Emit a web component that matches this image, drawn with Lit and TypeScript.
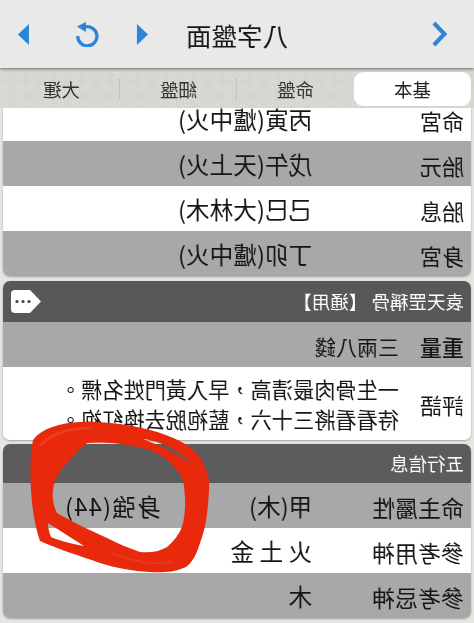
import { LitElement, html, css } from "lit";
import { customElement } from "lit/decorators.js";

@customElement("app-root")
export class AppRoot extends LitElement {
  static styles = css`
    :host {
      display: block;
      position: relative;
      width: 474px;
      height: 623px;
      overflow: hidden;
      font-family: "Noto Sans CJK TC", "Noto Sans", sans-serif;
      color: #151515;
      background: #e6e5e1;
    }
    .flip {
      transform: scaleX(-1);
      width: 474px;
      height: 623px;
      display: flex;
      flex-direction: column;
    }
    .top {
      height: 68px;
      flex: none;
      background: #e9e9e9;
      display: grid;
      grid-template-columns: 1fr auto 1fr;
      align-items: center;
      position: relative;
      z-index: 2;
      box-shadow: 0 1px 3px rgba(60, 60, 60, 0.7);
    }
    .title {
      font-size: 25.5px;
      line-height: 1;
      padding-top: 2px;
    }
    .chev {
      margin-left: 26px;
      display: block;
    }
    .tools {
      display: flex;
      justify-content: flex-end;
      align-items: center;
      padding-right: 18px;
      gap: 37px;
    }
    .tools svg {
      display: block;
    }
    .tools .reload {
      margin-right: 9px;
    }
    .tabs {
      height: 40px;
      flex: none;
      box-sizing: border-box;
      padding: 4px 3px 2px;
      display: grid;
      grid-template-columns: repeat(4, 1fr);
      background-color: #d6d4cf;
      background-image: radial-gradient(circle, transparent 2px, rgba(255, 255, 255, 0.22) 2px 3px, transparent 3px 5px, rgba(255, 255, 255, 0.16) 5px 6px, transparent 6px);
      background-size: 14px 14px;
    }
    .tab {
      display: flex;
      align-items: center;
      justify-content: center;
      font-size: 18.5px;
      line-height: 1;
      color: #333;
      position: relative;
    }
    .tab + .tab + .tab::before,
    .tab + .tab + .tab + .tab::before {
      content: "";
      position: absolute;
      left: 0;
      top: 6px;
      bottom: 6px;
      width: 1px;
      background: #c4c2bd;
    }
    .tab.on {
      background: #fff;
      border-radius: 9px;
      color: #222;
    }
    .main {
      flex: 1;
      overflow: hidden;
      padding: 0 3px;
      display: flex;
      flex-direction: column;
      gap: 5px;
      background-color: #e6e5e1;
    }
    .card {
      border-radius: 7px;
      overflow: hidden;
      flex: none;
      box-shadow: 0 1px 2px rgba(0, 0, 0, 0.3);
    }
    .first {
      margin-top: -12px;
    }
    .third {
      margin-top: -1px;
    }
    .row {
      height: 45px;
      box-sizing: border-box;
      padding: 3px 6px 0 7px;
      display: grid;
      grid-template-columns: repeat(3, 1fr);
      align-items: center;
      font-size: 23.7px;
      line-height: 1;
      background: #fff;
    }
    .row.g {
      background: #a8a8a8;
    }
    .lab2 {
      font-size: 22px;
    }
    .lab4 {
      font-size: 23px;
    }
    .wide {
      grid-column: 2 / 4;
    }
    .extra {
      letter-spacing: 1.2px;
    }
    .hd {
      height: 41px;
      box-sizing: border-box;
      background: #585858;
      color: #fff;
      font-size: 18.5px;
      line-height: 1;
      display: flex;
      justify-content: space-between;
      align-items: center;
      padding: 0 8px 0 7px;
    }
    .hd.low {
      height: 39px;
      background: #5c5c5c;
    }
    .tag {
      display: block;
    }
    .sub {
      display: grid;
      grid-template-columns: 65px 1fr;
      align-items: center;
      padding: 3px 6px 0 7px;
      height: 45px;
      box-sizing: border-box;
      background: #a8a8a8;
      font-size: 21px;
      line-height: 1;
    }
    .sub b {
      font-weight: 500;
      font-size: 22px;
    }
    .sub.poem {
      height: 73px;
      background: #fff;
      padding-top: 0;
    }
    .poemtext {
      line-height: 30px;
      font-size: 21.2px;
      white-space: nowrap;
    }
    .ring {
      position: absolute;
      left: 0;
      top: 0;
      pointer-events: none;
      filter: blur(0.5px);
    }
  `;

  private row(cls: string, a: string, b: string, c = "") {
    return html`<div class="row ${cls}">
      <span class=${a.length === 2 ? "lab2" : "lab4"}>${a}</span>
      <span class=${c ? "" : "wide"}>${b}</span>
      ${c ? html`<span class="extra">${c}</span>` : ""}
    </div>`;
  }

  render() {
    return html`
      <div class="flip">
        <div class="top">
          <svg class="chev" width="16" height="26" viewBox="0 0 16 26">
            <path d="M14 2 L3.5 13 L14 24" fill="none" stroke="#2a85d8" stroke-width="4"/>
          </svg>
          <div class="title">八字盤面</div>
          <div class="tools">
            <svg width="11" height="21" viewBox="0 0 11 21"><path d="M11 0 V21 L0 10.5 Z" fill="#2a85d8"/></svg>
            <svg class="reload" width="25" height="25" viewBox="0 0 25 25">
              <path d="M15 5 A9.6 9.6 0 1 0 22.2 14" fill="none" stroke="#2a85d8" stroke-width="3.3"/>
              <path d="M14 0 L14 10 L23 4.6 Z" fill="#2a85d8"/>
            </svg>
            <svg width="11" height="21" viewBox="0 0 11 21"><path d="M0 0 V21 L11 10.5 Z" fill="#2a85d8"/></svg>
          </div>
        </div>
        <div class="tabs">
          <div class="tab on">基本</div>
          <div class="tab">命盤</div>
          <div class="tab">細盤</div>
          <div class="tab">大運</div>
        </div>
        <div class="main">
          <div class="card first">
            ${this.row("", "命宮", "丙寅(爐中火)")}
            ${this.row("g", "胎元", "戊午(天上火)")}
            ${this.row("", "胎息", "己巳(大林木)")}
            ${this.row("g", "身宮", "丁卯(爐中火)")}
          </div>
          <div class="card">
            <div class="hd">
              <span>袁天罡稱骨 【通用】</span>
              <svg class="tag" width="30" height="23" viewBox="0 0 30 23">
                <path d="M30 19 A4 4 0 0 1 26 23 H11 L0 11.5 L11 0 H26 A4 4 0 0 1 30 4 Z" fill="#fff"/>
                <circle cx="12" cy="11.5" r="1.6" fill="#444"/>
                <circle cx="18" cy="11.5" r="1.6" fill="#444"/>
                <circle cx="24" cy="11.5" r="1.6" fill="#444"/>
              </svg>
            </div>
            <div class="sub"><b>重量</b><span>三兩八錢</span></div>
            <div class="sub poem">
              <span class="lab2">評語</span>
              <div class="poemtext">一生骨肉最清高，早入黃門姓名標。<br />待看看將三十六，藍袍脫去換紅袍。</div>
            </div>
          </div>
          <div class="card third">
            <div class="hd low"><span>五行信息</span></div>
            ${this.row("g", "命主屬性", "甲(木)", "身強(44)")}
            ${this.row("", "參考用神", "火 土 金")}
            ${this.row("g", "參考忌神", "木")}
          </div>
        </div>
      </div>
      <svg class="ring" width="474" height="623" viewBox="0 0 474 623">
        <path fill="#e8290c" fill-rule="evenodd" d="
          M33 440 C42 428 60 423 80 422 C105 421 130 425 150 430 C172 436 190 444 199 456 C207 468 210 478 209 490 C208 510 206 528 200 543 C197 553 193 562 186 567 C175 572 162 573 150 572 C132 571 116 568 100 563 C80 556 58 549 40 541 C36 530 32 510 31 490 C30 472 30 455 33 440 Z
          M87 443 C110 441 130 445 150 450 C165 456 176 466 183 480 C186 497 186 513 182 527 C178 536 173 542 167 547 C158 552 150 553 140 552 C128 548 117 543 107 538 C90 530 72 522 57 513 C53 505 52 497 53 490 C54 480 60 470 67 463 C73 456 79 449 87 443 Z
          M143 439 C156 441 167 445 176 451 C182 455 187 459 190 464 C184 459 176 454 168 450 C160 446 151 442 143 439 Z
          M48 523 C60 531 72 538 84 546 C72 544 60 541 51 537 C49 532 48 528 48 523 Z
        "/>
        <path fill="none" stroke="#ee4b32" stroke-opacity="0.55" stroke-width="3" d="M40 446 C52 432 70 428 92 428"/>
        <path fill="none" stroke="#ee4b32" stroke-opacity="0.45" stroke-width="2" d="M112 553 C130 560 150 566 172 562"/>
      </svg>
    `;
  }
}
